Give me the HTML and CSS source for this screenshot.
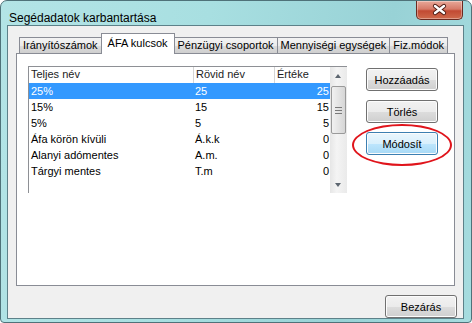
FILE: index.html
```html
<!DOCTYPE html>
<html lang="hu">
<head>
    <meta charset="UTF-8">
    <title>Segédadatok karbantartása</title>
    <link rel="stylesheet" href="styles.css">
</head>
<body>
    <div class="window">
        <div class="titlebar">
            <span class="title">Segédadatok karbantartása</span>
            <div class="close-btn">
                <svg width="45" height="18" viewBox="0 0 45 18">
                    <path d="M18 5 L27 12 M27 5 L18 12" stroke="#4a1a12" stroke-width="4.2" stroke-linecap="round"/>
                    <path d="M18 5 L27 12 M27 5 L18 12" stroke="#ffffff" stroke-width="2.4" stroke-linecap="round"/>
                </svg>
            </div>
        </div>

        <div class="client">
            <div class="tabs">
                <div class="tab">Irányítószámok</div>
                <div class="tab active">ÁFA kulcsok</div>
                <div class="tab">Pénzügyi csoportok</div>
                <div class="tab">Mennyiségi egységek</div>
                <div class="tab">Fiz.módok</div>
            </div>

            <div class="panel">
                <div class="listview">
                    <div class="list-body">
                        <div class="row header">
                            <div class="col c-name">Teljes név</div>
                            <div class="col c-short sep">Rövid név</div>
                            <div class="col c-value sep">Értéke</div>
                        </div>
                        <div class="row selected">
                            <div class="col c-name">25%</div>
                            <div class="col c-short">25</div>
                            <div class="col c-value num">25</div>
                        </div>
                        <div class="row">
                            <div class="col c-name">15%</div>
                            <div class="col c-short">15</div>
                            <div class="col c-value num">15</div>
                        </div>
                        <div class="row">
                            <div class="col c-name">5%</div>
                            <div class="col c-short">5</div>
                            <div class="col c-value num">5</div>
                        </div>
                        <div class="row">
                            <div class="col c-name">Áfa körön kívüli</div>
                            <div class="col c-short">Á.k.k</div>
                            <div class="col c-value num">0</div>
                        </div>
                        <div class="row">
                            <div class="col c-name">Alanyi adómentes</div>
                            <div class="col c-short">A.m.</div>
                            <div class="col c-value num">0</div>
                        </div>
                        <div class="row">
                            <div class="col c-name">Tárgyi mentes</div>
                            <div class="col c-short">T.m</div>
                            <div class="col c-value num">0</div>
                        </div>
                    </div>

                    <div class="scrollbar">
                        <div class="arrow up"></div>
                        <div class="track">
                            <div class="thumb"><span class="grip"></span></div>
                        </div>
                        <div class="arrow down"></div>
                    </div>
                </div>

                <div class="actions">
                    <button class="btn">Hozzáadás</button>
                    <button class="btn">Törlés</button>
                    <div class="highlight-wrap">
                        <button class="btn focused">Módosít</button>
                        <div class="ring"></div>
                    </div>
                </div>
            </div>

            <div class="footer">
                <button class="btn">Bezárás</button>
            </div>
        </div>
    </div>
</body>
</html>
```

FILE: styles.css
```css
body {
    margin: 0;
    background-color: #ffffff;
    font-family: "Liberation Sans", Arial, sans-serif;
    font-size: 11px;
    color: #000;
}
.window {
    width: 472px;
    height: 323px;
    box-sizing: border-box;
    border: 1px solid #4f7279;
    border-radius: 7px 7px 4px 4px;
    background: linear-gradient(100deg, #b3e4e6 0%, #a8dfe1 40%, #98d2d6 75%, #a6dcdf 100%);
    padding: 0 7px 8px 6px;
    display: flex;
    flex-direction: column;
}
.titlebar {
    height: 28px;
    display: flex;
    justify-content: space-between;
    align-items: flex-start;
}
.title {
    font-size: 12px;
    color: #000;
    margin: 10px 0 0 2px;
}
.close-btn {
    width: 45px;
    height: 18px;
    margin-right: 1px;
    border: 1px solid #6b2a20;
    border-top: none;
    border-radius: 0 0 5px 5px;
    background: linear-gradient(#e8a899 0%, #d67a68 45%, #c24a33 55%, #cf6a4c 100%);
    box-shadow: inset 0 0 0 1px rgba(255,255,255,0.35);
}
.close-btn svg {
    display: block;
}

.client {
    flex: 1;
    background-color: #f0f0f0;
    border: 1px solid #5d8189;
    display: flex;
    flex-direction: column;
}

/* Tabs */
.tabs {
    height: 19px;
    margin-top: 8px;
    padding-left: 11px;
    display: flex;
    align-items: flex-end;
    position: relative;
    z-index: 1;
}
.tab {
    height: 15px;
    line-height: 15px;
    padding: 0 3px;
    border: 1px solid #898c95;
    border-bottom: none;
    border-left: none;
    background: linear-gradient(#f3f3f3 0%, #ebebeb 50%, #dddddd 50%, #cfcfcf 100%);
    white-space: nowrap;
}
.tab:first-child {
    border-left: 1px solid #898c95;
}
.tab.active {
    height: 20px;
    line-height: 18px;
    margin-bottom: -1px;
    padding: 0 6px;
    background: #ffffff;
    border-left: 1px solid #898c95;
    margin-left: -1px;
}
.tab.active + .tab {
    border-left: none;
}

.panel {
    height: 219px;
    margin: 0 8px;
    border: 1px solid #898c95;
    background-color: #ffffff;
    padding: 12px 0 0 11px;
    display: flex;
    align-items: flex-start;
}

/* List view */
.listview {
    width: 318px;
    height: 126px;
    border-left: 1px solid #8e9095;
    border-top: 1px solid #8e9095;
    display: flex;
}
.list-body {
    flex: 1;
}
.row {
    height: 16px;
    line-height: 16px;
    display: flex;
    white-space: nowrap;
}
.row.header {
    height: 16px;
    line-height: 15px;
    color: #1c1c1c;
}
.row.selected {
    background-color: #3399ff;
    color: #ffffff;
}
.col {
    box-sizing: border-box;
    padding-left: 2px;
    overflow: hidden;
}
.c-name { width: 164px; }
.c-short { width: 81px; }
.c-value { width: 56px; }
.sep {
    border-left: 1px solid #d5d5d5;
    padding-left: 2px;
}
.num {
    text-align: right;
    padding-right: 1px;
}

/* Scrollbar */
.scrollbar {
    width: 17px;
    display: flex;
    flex-direction: column;
    background: linear-gradient(90deg, #e6e6e6, #f4f4f4 40%, #eaeaea);
}
.arrow {
    height: 17px;
    position: relative;
}
.arrow::after {
    content: "";
    position: absolute;
    left: 5px;
    width: 0;
    height: 0;
    border-left: 3.5px solid transparent;
    border-right: 3.5px solid transparent;
}
.arrow.up::after {
    top: 7px;
    border-bottom: 4px solid #5d6670;
}
.arrow.down::after {
    top: 7px;
    border-top: 4px solid #5d6670;
}
.track {
    flex: 1;
    padding-top: 2px;
}
.thumb {
    height: 46px;
    margin: 0 1px;
    border: 1px solid #9a9a9a;
    border-radius: 2px;
    background: linear-gradient(90deg, #f1f1f1, #e4e4e4 50%, #d6d6d6);
    display: flex;
    align-items: center;
    justify-content: center;
}
.grip {
    width: 7px;
    height: 5px;
    border-top: 1px solid #7a7a7a;
    border-bottom: 1px solid #7a7a7a;
    background: linear-gradient(transparent 40%, #7a7a7a 40%, #7a7a7a 60%, transparent 60%);
}

/* Buttons */
.actions {
    margin-left: 19px;
    padding-top: 2px;
    display: flex;
    flex-direction: column;
    gap: 9px;
}
.btn {
    width: 72px;
    height: 23px;
    font-family: "Liberation Sans", Arial, sans-serif;
    font-size: 11px;
    color: #000;
    border: 1px solid #707070;
    border-radius: 3px;
    background: linear-gradient(#f2f2f2 0%, #ebebeb 50%, #dddddd 50%, #cfcfcf 100%);
    box-shadow: inset 0 0 0 1px #fcfcfc;
    padding: 0;
}
.btn.focused {
    border-color: #3c7fb1;
    background: linear-gradient(#eaf6fd 0%, #d9f0fc 50%, #bee6fd 50%, #a7d9f5 100%);
}
.highlight-wrap {
    position: relative;
}
.ring {
    position: absolute;
    left: -14px;
    top: -8px;
    width: 96px;
    height: 38px;
    border: 2px solid #e0141b;
    border-radius: 50%;
}

.footer {
    margin-top: 9px;
    padding-right: 6px;
    display: flex;
    justify-content: flex-end;
}
```
